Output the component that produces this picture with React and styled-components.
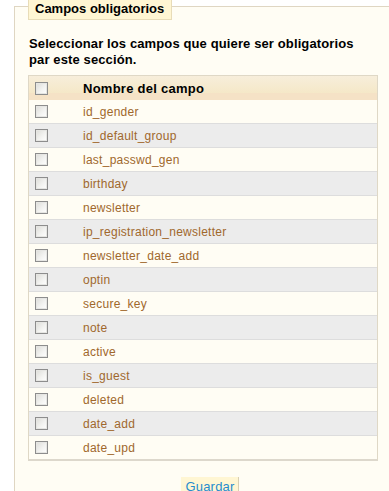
import React from "react";
import styled, { createGlobalStyle } from "styled-components";

const GlobalStyle = createGlobalStyle`
  html, body {
    margin: 0;
    padding: 0;
    background: #ffffff;
    overflow: hidden;
    font-family: "Liberation Sans", Arial, sans-serif;
  }
`;

const Page = styled.div`
  padding-left: 14px;
  width: 400px;
`;

const Fieldset = styled.div`
  margin-top: 6px;
  border-top: 1px solid #dfd6c2;
  border-left: 1px solid #dfd6c2;
  background: #fffdf4;
  padding: 0 0 20px 13px;
  min-height: 500px;
`;

const Legend = styled.div`
  display: block;
  width: max-content;
  margin-top: -7px;
  background: #fff6d3;
  border: 1px solid #e8dcb8;
  border-top: none;
  padding: 1px 7px 2px 6px;
  font-size: 13px;
  font-weight: bold;
  line-height: 16px;
  color: #000;
`;

const Intro = styled.p`
  margin: 16px 0 7px 1px;
  font-size: 13px;
  font-weight: bold;
  line-height: 16px;
  letter-spacing: 0.12px;
  color: #000;
  width: 335px;
`;

const Table = styled.div`
  width: 348px;
  border: 1px solid #dfd8c6;
  border-bottom: 2px solid #ddd8cc;
`;

const Row = styled.div`
  display: grid;
  grid-template-columns: 54px 1fr;
  align-items: center;
  height: ${(p) => (p.$head ? "24px" : "23px")};
  border-bottom: ${(p) => (p.$last || p.$head ? "none" : "1px solid #dddddd")};
  background: ${(p) =>
    p.$head
      ? "linear-gradient(to bottom, #f7eedb 0%, #f5e8c8 70%, #f5e2c6 71%, #f5e2c6 100%)"
      : p.$alt
      ? "#ececec"
      : "#fffdf4"};
`;

const CheckCell = styled.div`
  padding-left: 6px;
  display: flex;
  align-items: center;
`;

const Check = styled.span`
  display: block;
  width: 11px;
  height: 11px;
  border: 1px solid #8d8d8d;
  background: linear-gradient(135deg, #dcdcd8 0%, #f4f4f2 60%, #ffffff 100%);
  box-shadow: inset 0 0 0 1px #e6e6e3;
`;

const Name = styled.div`
  font-size: ${(p) => (p.$head ? "13px" : "12px")};
  font-weight: ${(p) => (p.$head ? "bold" : "normal")};
  letter-spacing: 0.26px;
  color: ${(p) => (p.$head ? "#000" : "#a0682c")};
`;

const Actions = styled.div`
  width: 348px;
  display: flex;
  justify-content: center;
  padding-left: 8px;
  margin-top: 16px;
`;

const Button = styled.button`
  background: #fff6d3;
  border: none;
  border-right: 1px solid #d8cfb3;
  padding: 2px 3px 2px 4px;
  font-family: "Liberation Sans", Arial, sans-serif;
  font-size: 13px;
  line-height: 16px;
  letter-spacing: 0.2px;
  color: #268ccd;
  cursor: pointer;
`;

const fields = [
  "id_gender",
  "id_default_group",
  "last_passwd_gen",
  "birthday",
  "newsletter",
  "ip_registration_newsletter",
  "newsletter_date_add",
  "optin",
  "secure_key",
  "note",
  "active",
  "is_guest",
  "deleted",
  "date_add",
  "date_upd",
];

export default function App() {
  return (
    <>
      <GlobalStyle />
      <Page>
        <Fieldset>
          <Legend>Campos obligatorios</Legend>
          <Intro>Seleccionar los campos que quiere ser obligatorios par este sección.</Intro>
          <Table>
            <Row $head>
              <CheckCell>
                <Check />
              </CheckCell>
              <Name $head>Nombre del campo</Name>
            </Row>
            {fields.map((f, i) => (
              <Row key={f} $alt={i % 2 === 1} $last={i === fields.length - 1}>
                <CheckCell>
                  <Check />
                </CheckCell>
                <Name>{f}</Name>
              </Row>
            ))}
          </Table>
          <Actions>
            <Button>Guardar</Button>
          </Actions>
        </Fieldset>
      </Page>
    </>
  );
}
